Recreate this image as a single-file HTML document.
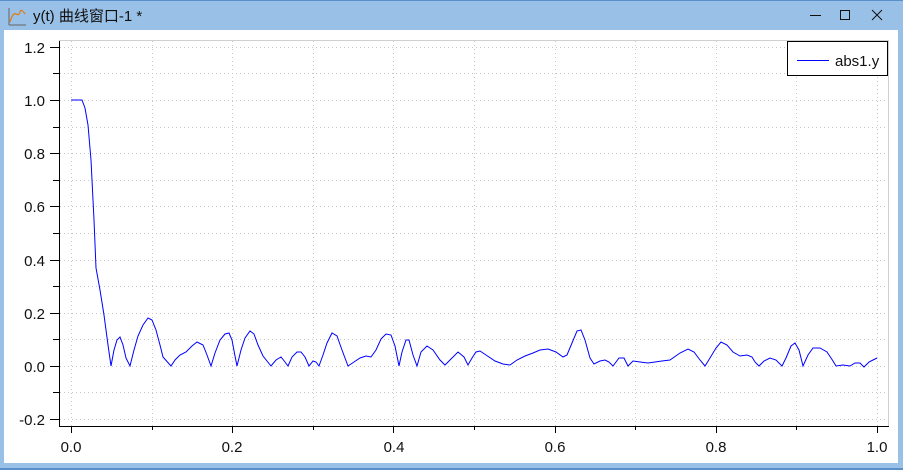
<!DOCTYPE html><html><head><meta charset="utf-8"><style>
body{margin:0;width:903px;height:470px;overflow:hidden;background:#99c0e6;font-family:"Liberation Sans","Noto Sans CJK SC",sans-serif}
</style></head><body>
<svg width="903" height="470" xmlns="http://www.w3.org/2000/svg" style="position:absolute;left:0;top:0">
<rect x="0" y="0" width="903" height="470" fill="#99c0e6"/>
<rect x="0" y="0" width="903" height="1" fill="#5a8fc8"/>
<rect x="0" y="468" width="903" height="2" fill="#5a8fc8"/>
<rect x="4" y="30" width="894" height="433" fill="#fff"/>
<path d="M9 25 L9 8 M9 25 L26 25" stroke="#666" stroke-width="1" fill="none"/>
<path d="M10 22 Q13 12 16 14 T20 12 T25 14" stroke="#e07a10" stroke-width="1.2" fill="none"/>
<text x="33" y="21" font-size="15" fill="#111">y(t) 曲线窗口-1 *</text>
<path d="M810 15.5 H821" stroke="#111" stroke-width="1"/>
<rect x="840.5" y="10.5" width="9" height="9" fill="none" stroke="#111"/>
<path d="M872 10 L882 20 M882 10 L872 20" stroke="#111" stroke-width="1"/>
<rect x="59.5" y="40.5" width="829" height="386" fill="none" stroke="#d0d0d0"/>
<g stroke="#c8c8c8" stroke-dasharray="1,3" stroke-width="1">
<path d="M71.5 41V426M152.5 41V426M232.5 41V426M313.5 41V426M393.5 41V426M474.5 41V426M555.5 41V426M635.5 41V426M716.5 41V426M796.5 41V426M877.5 41V426"/>
<path d="M60 47.5H888M60 73.5H888M60 100.5H888M60 127.5H888M60 153.5H888M60 180.5H888M60 206.5H888M60 233.5H888M60 260.5H888M60 286.5H888M60 313.5H888M60 339.5H888M60 366.5H888M60 392.5H888M60 419.5H888"/>
</g>
<g stroke="#000" stroke-width="1">
<path d="M59.5 41V427M59 426.5H889"/>
<path d="M50 47.5H59M53 73.5H59M50 100.5H59M53 127.5H59M50 153.5H59M53 180.5H59M50 206.5H59M53 233.5H59M50 260.5H59M53 286.5H59M50 313.5H59M53 339.5H59M50 366.5H59M53 392.5H59M50 419.5H59"/>
<path d="M71.5 427V433M152.5 427V430M232.5 427V433M313.5 427V430M393.5 427V433M474.5 427V430M555.5 427V433M635.5 427V430M716.5 427V433M796.5 427V430M877.5 427V433"/>
</g>
<g font-size="15" fill="#111" text-anchor="end">
<text x="45" y="53">1.2</text><text x="45" y="106">1.0</text><text x="45" y="159">0.8</text><text x="45" y="212">0.6</text><text x="45" y="266">0.4</text><text x="45" y="319">0.2</text><text x="45" y="372">0.0</text><text x="45" y="425">-0.2</text>
</g>
<g font-size="15" fill="#111" text-anchor="middle">
<text x="71" y="452">0.0</text><text x="232" y="452">0.2</text><text x="394" y="452">0.4</text><text x="555" y="452">0.6</text><text x="716" y="452">0.8</text><text x="877" y="452">1.0</text>
</g>
<polyline fill="none" stroke="#0000ff" stroke-width="1" points="71,100 82,100 85,108 88,125 91,160 94,220 96,268 100,290 104,315 108,345 111,366 114,350 117,340 120,337 123,345 126,358 130,366 134,350 138,336 143,325 148,318 152,320 156,330 160,345 163,357 171,366 175,360 180,355 186,352 192,346 197,342 203,345 207,355 211,366 215,353 220,340 225,334 229,333 232,340 235,356 237,366 241,350 245,338 250,331 254,334 258,345 263,356 271,366 276,360 281,357 285,362 288,366 292,357 297,352 301,352 305,357 309,366 313,361 316,362 319,366 323,355 327,343 332,333 337,336 342,350 348,366 354,362 360,358 366,356 371,357 376,350 381,339 386,334 391,335 395,346 399,366 402,352 406,340 409,340 413,355 417,366 421,352 427,346 433,350 440,360 445,365 450,360 458,352 464,357 468,365 472,358 476,352 480,351 486,355 495,361 503,364 510,365 517,360 525,356 533,353 540,350 548,349 556,352 563,357 567,355 572,343 577,331 581,330 585,340 590,358 594,364 600,361 605,360 609,362 613,366 619,358 624,358 628,366 633,361 640,362 648,363 655,362 662,361 670,360 680,353 688,349 694,352 700,360 705,366 710,358 716,348 721,342 727,345 733,352 740,356 747,355 752,357 755,362 759,366 764,361 770,358 776,360 782,366 786,358 791,346 795,343 799,350 803,366 808,355 813,348 820,348 827,352 833,361 836,366 843,365 850,366 855,363 860,363 864,367 869,362 873,360 877,358"/>
<rect x="787.5" y="41.5" width="100" height="34" fill="#fff" stroke="#000"/>
<path d="M797 60.5H829" stroke="#0000ff"/>
<text x="835" y="66" font-size="15" fill="#111">abs1.y</text>
</svg>
</body></html>
